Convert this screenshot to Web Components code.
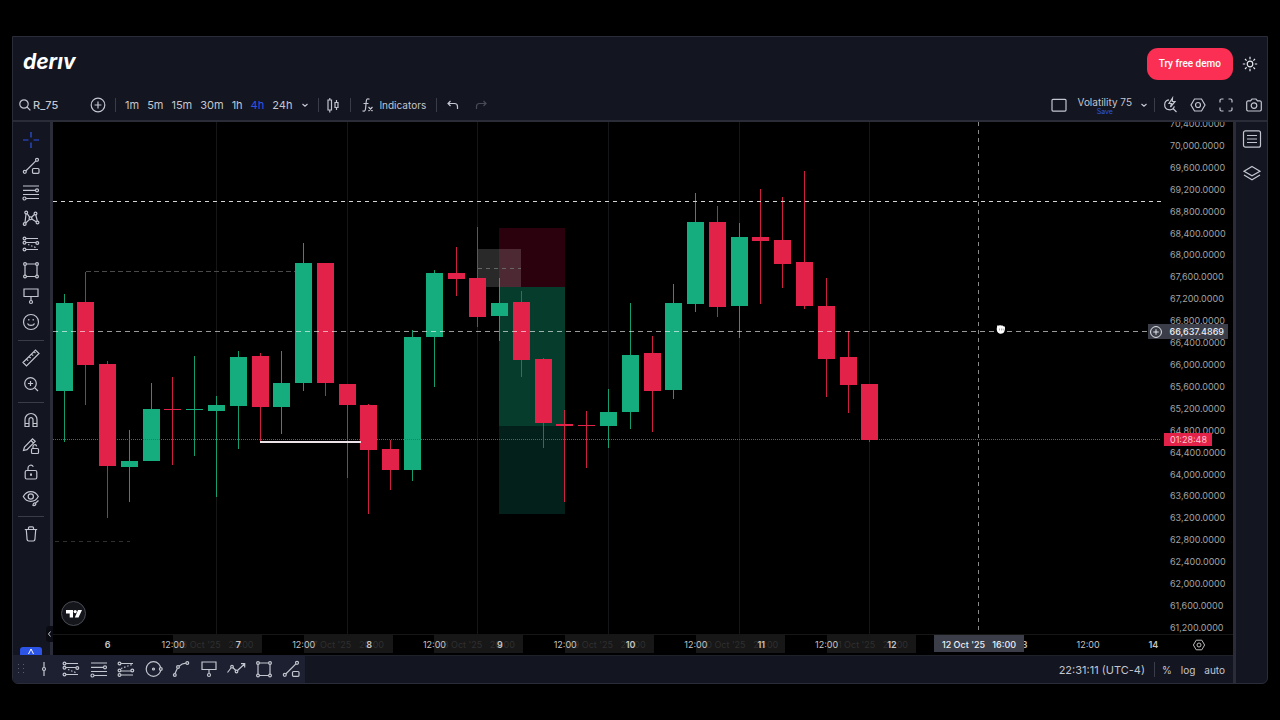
<!DOCTYPE html>
<html lang="en">
<head>
<meta charset="utf-8">
<meta name="viewport" content="width=device-width, initial-scale=1">
<title>Deriv charts</title>
<style>
  * { box-sizing: border-box; }

  body {
    --panel: #131520;
    --line: #2a2c38;
    --text: #c3c6cf;
    --blue: #2c55e8;
    --green: #15ac7e;
    --red: #e32249;
    margin: 0;
    min-height: 100vh;
    padding: 36px 12px;
    display: flex;
    background: #000;
    color: var(--text);
    font: 10px/14px Inter, "Liberation Sans", sans-serif;
  }
</style>
</head>
<body>
<chart-app>
  <app-header slot="header"></app-header>
  <chart-toolbar slot="toolbar"></chart-toolbar>
  <drawing-rail slot="left"></drawing-rail>
  <price-chart slot="chart"></price-chart>
  <favorites-bar slot="bottom"></favorites-bar>
  <chart-footer slot="bottom"></chart-footer>
  <widget-rail slot="right"></widget-rail>
</chart-app>

<script>
const BASE = `
  * { box-sizing: border-box; }
  button {
    display: flex;
    align-items: center;
    justify-content: center;
    margin: 0;
    padding: 0;
    border: 0;
    background: none;
    color: inherit;
    font: inherit;
    white-space: nowrap;
    cursor: pointer;
  }
`;

// 20x20 line icons, stroked with the current colour
const ICONS = {
  search: '<circle cx="9" cy="9" r="4.2"/><path d="M12 12l3.4 3.4"/>',
  plus: '<circle cx="10" cy="10" r="6.8"/><path d="M10 6.6v6.8M6.6 10h6.8"/>',
  chevron: '<path d="M7.5 9l2.5 2.2L12.500 9"/>',
  candles: '<path d="M5 5h3.500v10H5zM6.800 3V5M6.800 15v2.500M12 7.500h3v5h-3zM13.500 5V7.500M13.500 12.500v2.500"/>',
  fx: '<path d="M11.500 4.200c-2-1-3 0-3.200 1.800L7.500 14c-.2 2-1.500 2.700-3 1.800M5.500 8.500h5M10.500 12l4 4M14.500 12l-4 4"/>',
  undo: '<path d="M7.500 6L5 8.500 7.500 11M5 8.500h6.500a3 3 0 0 1 3 3V14"/>',
  redo: '<path d="M12.500 6L15 8.500 12.500 11M15 8.500H8.500a3 3 0 0 0-3 3V14"/>',
  square: '<rect x="3" y="4.300" width="14" height="11.800" rx="1"/>',
  quick: '<path d="M9 4.800a5 5 0 1 0 5.400 6.600M13 13.500l3.500 3.500M12.500 3L9 8.500h2.500L10.500 12l4.500-5.500h-2.700z"/>',
  hexagon: '<path d="M6.500 4h7L17 10l-3.500 6h-7L3 10z"/><circle cx="10" cy="10" r="2.500"/>',
  fullscreen: '<path d="M4 7.500V5.500A1.500 1.500 0 0 1 5.500 4h2M12.500 4h2A1.500 1.500 0 0 1 16 5.500v2M16 12.500v2a1.500 1.500 0 0 1-1.500 1.500h-2M7.500 16h-2A1.500 1.500 0 0 1 4 14.500v-2"/>',
  camera: '<path d="M4 5.800h2.500L8 4h4l1.500 1.800H16A1.500 1.500 0 0 1 17.300 7.300v7.200A1.500 1.500 0 0 1 16 16H4a1.500 1.500 0 0 1-1.300-1.500V7.300A1.500 1.500 0 0 1 4 5.800z"/><circle cx="10" cy="10.600" r="2.800"/>',
  sun: '<circle cx="10" cy="10" r="2.800"/><path d="M10 2.800v2.400M10 14.800v2.400M2.800 10h2.400M14.800 10h2.400M5 5l1.600 1.600M13.400 13.400L15 15M15 5l-1.600 1.600M6.600 13.400L5 15"/>',
  cross: '<path d="M10 2v5.500M10 12.500V18M2 10h5.500M12.500 10H18"/>',
  trend: '<circle cx="3.800" cy="15.800" r="1.500"/><circle cx="16" cy="3.800" r="1.500"/><path d="M5 14.700L14.900 4.900"/><rect x="11.500" y="12.500" width="6.500" height="4.800" rx="1"/>',
  fib: '<path d="M2 4h16M2 8.300h12.500M2 12.500h16M5 16.500h13"/><circle cx="16" cy="8.300" r="1.500"/><circle cx="3.500" cy="16.500" r="1.500"/>',
  pattern: '<circle cx="5.200" cy="4.500" r="1.400"/><circle cx="14.500" cy="5.500" r="1.400"/><circle cx="3.700" cy="16" r="1.400"/><circle cx="16.500" cy="14.500" r="1.400"/><circle cx="9.500" cy="10.300" r="1.400"/><path d="M5 6L4 14.500M14.800 7l1.500 6M6.200 5.600l2.400 3.600M13.500 6.500L10.500 9.300M4.800 15l3.700-3.700M10.700 11l4.500 2.800"/>',
  forecast: '<path d="M5 4.500h12M5 8.500h10M5 15.500h12"/><path d="M7 10.500l9 3.500" stroke-dasharray="1.500 1.800"/><circle cx="3.500" cy="4.500" r="1.400"/><circle cx="3.500" cy="8.800" r="1.400"/><circle cx="16.300" cy="9" r="1.400"/><circle cx="3.500" cy="15.500" r="1.400"/>',
  position: '<path d="M5 4.500h12M5 12h10M5 16h12"/><path d="M5 9.500l11-4" stroke-dasharray="1.500 1.800"/><circle cx="3.500" cy="4.500" r="1.400"/><circle cx="3.500" cy="11.500" r="1.400"/><circle cx="16.300" cy="11.500" r="1.400"/><circle cx="3.500" cy="16" r="1.400"/>',
  rect: '<path d="M5.200 4h9.600M5.200 16.500h9.600M4 5.300v9.900M16 5.300v9.900"/><circle cx="4" cy="4" r="1.400"/><circle cx="16" cy="4" r="1.400"/><circle cx="4" cy="16.500" r="1.400"/><circle cx="16" cy="16.500" r="1.400"/>',
  callout: '<path d="M3 3h14v7.500H3zM10 10.500v4"/><circle cx="10" cy="16" r="1.500"/>',
  smile: '<circle cx="10" cy="10" r="7.500"/><path d="M6.500 11.500c1 2.500 6 2.500 7 0M7.800 7v1.500M12.200 7v1.500"/>',
  ruler: '<path d="M2 14.500L14.500 2 18 5.500 5.500 18zM5.500 11l1.700 1.700M8 8.500l1.700 1.700M10.500 6l1.700 1.700M13 3.700l1.500 1.500"/>',
  zoom: '<circle cx="9.500" cy="9.500" r="5.800"/><path d="M13.800 13.800L17 17M9.500 6.900v5.200M6.900 9.500h5.200"/>',
  magnet: '<path d="M4 16.500V9.500a6 6 0 0 1 12 0v7h-4V9.700a2 2 0 0 0-4 0v6.800zM4 13.500h4M12 13.500h4"/>',
  pencil: '<path d="M2.500 14.500l1-3.500L11.500 2.800l2.700 2.500L6 13.600zM10 4.500l2.500 2.500"/><rect x="10.500" y="12.500" width="7" height="5" rx="1"/><path d="M12 12.500v-1.700a1.800 1.800 0 0 1 3.600-.5"/>',
  lock: '<rect x="4.200" y="8.500" width="11.600" height="8.500" rx="1.500"/><path d="M7 8.500V6a2.800 2.800 0 0 1 5.300-1.300"/><path d="M10 11.500v2.200" stroke-width="2"/>',
  eye: '<path d="M2.300 8.500c3.500-6.500 11.500-6.500 15 0c-3.500 6.500-11.500 6.500-15 0z"/><circle cx="9.800" cy="8.500" r="2.600"/><path d="M12 17.500c0-2 1-2.800 2.500-2.500 1 1.500-.5 3-2.500 2.500zM14.700 15l2.800-2.500"/>',
  trash: '<path d="M3.800 5.500h12.400M7.500 5.300V3.800a1 1 0 0 1 1-1h3a1 1 0 0 1 1 1v1.500M5.300 5.700l.8 10a1.500 1.500 0 0 0 1.500 1.300h4.800a1.500 1.500 0 0 0 1.500-1.300l.8-10"/>',
  vline: '<path d="M10 3v5.500M10 11.500V17"/><circle cx="10" cy="10" r="1.500"/>',
  circle: '<circle cx="9.500" cy="10" r="7.300"/><circle cx="9.500" cy="10" r="1"/><circle cx="16.800" cy="10" r="1.400" fill="#1c2030"/>',
  curve: '<circle cx="3.800" cy="16" r="1.400"/><circle cx="7" cy="8" r="1.400"/><circle cx="16.300" cy="4" r="1.400"/><path d="M4 14.600L6.300 9.400M8.200 7.200c2-2 4-2.800 6.700-3"/>',
  path: '<path d="M1.500 13.500L5 9M6.800 8.500l3 3M11.500 11.500L18.500 5M15 4.700h3.700v3.700"/><circle cx="6" cy="7.700" r="1.300"/><circle cx="10.500" cy="12.500" r="1.300"/>',
  list: '<rect x="1.500" y="1.800" width="17" height="16.400" rx="2"/><path d="M5 6.500h10M5 10h10M5 13.500h10"/>',
  layers: '<path d="M10 3.500l8 4.700-8 4.600-8-4.600zM2 12l8 4.700 8-4.700"/>'
};

class LineIcon extends HTMLElement {
  constructor() {
    super();
    this.attachShadow({ mode: 'open' });
  }

  connectedCallback() {
    this.shadowRoot.innerHTML = `
      <style>
        :host { display: block; width: 20px; height: 20px; flex: none; }
        svg { display: block; width: 100%; height: 100%; }
      </style>
      <svg viewBox="0 0 20 20" fill="none" stroke="currentColor" stroke-width="1.200" aria-hidden="true">
        ${ICONS[this.getAttribute('name')]}
      </svg>
    `;
  }
}

class ChartApp extends HTMLElement {
  constructor() {
    super();
    this.attachShadow({ mode: 'open' }).innerHTML = `
      <style>
        ${BASE}
        :host {
          flex: 1;
          min-width: 0;
          display: flex;
          flex-direction: column;
          background: var(--panel);
          border: 1px solid var(--line);
          border-radius: 0 0 6px 6px;
          overflow: hidden;
        }
        .body, .stage { flex: 1; display: flex; min-width: 0; }
        .main { flex: 1; min-width: 0; display: flex; flex-direction: column; }
        .bottom { display: flex; height: 28px; }
      </style>
      <slot name="header"></slot>
      <slot name="toolbar"></slot>
      <div class="body">
        <div class="main">
          <div class="stage">
            <slot name="left"></slot>
            <slot name="chart"></slot>
          </div>
          <div class="bottom"><slot name="bottom"></slot></div>
        </div>
        <slot name="right"></slot>
      </div>
    `;
  }
}

class AppHeader extends HTMLElement {
  constructor() {
    super();
    this.attachShadow({ mode: 'open' }).innerHTML = `
      <style>
        ${BASE}
        :host {
          display: flex;
          align-items: center;
          height: 53px;
          padding: 0 7px 0 10px;
        }
        .logo {
          margin-right: auto;
          padding-bottom: 4px;
          color: #fff;
          font: italic 700 21px/24px Inter, sans-serif;
          text-decoration: none;
        }
        .demo {
          height: 32px;
          padding: 0 12px;
          border-radius: 11px;
          background: #fb2f53;
          color: #fff;
          font: 500 10px/14px Roboto, sans-serif;
          margin-right: 7px;
        }
        .theme { color: #e6e8ee; }
      </style>
      <a class="logo" href="#" aria-label="deriv">derıv</a>
      <button class="demo">Try free demo</button>
      <button class="theme" aria-label="Theme"><line-icon name="sun"></line-icon></button>
    `;
  }
}

class ChartToolbar extends HTMLElement {
  constructor() {
    super();
    const frames = ['1m', '5m', '15m', '30m', '1h', '4h', '24h'];
    this.attachShadow({ mode: 'open' }).innerHTML = `
      <style>
        ${BASE}
        :host {
          display: flex;
          align-items: center;
          height: 32px;
          border-bottom: 2px solid var(--line);
        }
        .group { display: flex; align-items: center; }
        .sep { width: 1px; height: 14px; background: #3a3d49; }
        .symbol { width: 75px; justify-content: flex-start; padding-left: 2px; font-size: 11px; font-weight: 500; }
        .symbol line-icon { margin-right: -2px; }
        .frames { gap: 8px; padding-left: 9px; font-size: 11px; }
        .frames .on { color: var(--blue); }
        .frames line-icon { margin: 0 3px 0 -5px; }
        .icon { padding: 0 7px 0 4px; }
        .indicators { padding: 0 10px 0 7px; }
        .indicators line-icon { margin-right: 1px; }
        .undo { gap: 8px; padding-left: 6px; }
        .undo button:last-child { opacity: .3; }
        .right { margin-left: auto; padding-right: 3px; }
        .layout { flex-direction: column; margin: 0 2px 0 8px; line-height: 12px; }
        .layout small { font-size: 7px; line-height: 7px; color: var(--blue); }
        .tools { gap: 8px; padding-left: 5px; }
      </style>
      <div class="group">
        <button class="symbol"><line-icon name="search"></line-icon>R_75</button>
        <button aria-label="Compare symbols"><line-icon name="plus"></line-icon></button>
      </div>
      <span class="sep" style="margin-left: 7px"></span>
      <div class="group frames">
        ${frames.map(f => `<button class="${f === '4h' ? 'on' : ''}">${f}</button>`).join('')}
        <button aria-label="More intervals"><line-icon name="chevron"></line-icon></button>
      </div>
      <span class="sep"></span>
      <button class="icon" aria-label="Chart type"><line-icon name="candles"></line-icon></button>
      <span class="sep"></span>
      <button class="indicators"><line-icon name="fx"></line-icon>Indicators</button>
      <span class="sep"></span>
      <div class="group undo">
        <button aria-label="Undo"><line-icon name="undo"></line-icon></button>
        <button aria-label="Redo" disabled><line-icon name="redo"></line-icon></button>
      </div>
      <div class="group right">
        <button aria-label="Layout"><line-icon name="square"></line-icon></button>
        <button class="layout"><span>Volatility 75</span><small>Save</small></button>
        <button aria-label="Manage layouts"><line-icon name="chevron"></line-icon></button>
        <span class="sep"></span>
        <div class="group tools">
          <button aria-label="Quick search"><line-icon name="quick"></line-icon></button>
          <button aria-label="Settings"><line-icon name="hexagon"></line-icon></button>
          <button aria-label="Fullscreen"><line-icon name="fullscreen"></line-icon></button>
          <button aria-label="Snapshot"><line-icon name="camera"></line-icon></button>
        </div>
      </div>
    `;
  }
}

class DrawingRail extends HTMLElement {
  constructor() {
    super();
    const groups = [
      ['cross', 'trend', 'fib', 'pattern', 'forecast', 'rect', 'callout', 'smile'],
      ['ruler', 'zoom'],
      ['magnet', 'pencil', 'lock', 'eye'],
      ['trash']
    ];
    this.attachShadow({ mode: 'open' }).innerHTML = `
      <style>
        ${BASE}
        :host {
          position: relative;
          flex: none;
          display: flex;
          flex-direction: column;
          align-items: center;
          width: 40px;
          padding: 5px 2px 0 0;
          border-right: 3px solid var(--line);
        }
        button { width: 35px; height: 26px; }
        hr { width: 26px; height: 1px; margin: 5px 0 4px; border: 0; background: #3a3d49; }
        .cross { color: var(--blue); }
        .more {
          width: 22px;
          height: 8px;
          margin-top: auto;
          border-radius: 3px 3px 0 0;
          background: var(--blue);
          color: #fff;
        }
        .fold {
          position: absolute;
          right: -3px;
          bottom: 13px;
          width: 7px;
          height: 16px;
          border-radius: 3px 0 0 3px;
          background: #0b0c13;
        }
      </style>
      ${groups.map(g => g.map(n => `
        <button class="${n}" aria-label="${n}"><line-icon name="${n}"></line-icon></button>`).join('')).join('<hr>')}
      <button class="more" aria-label="More tools">
        <svg width="8" height="6" viewBox="0 0 8 6" fill="none" stroke="currentColor"><path d="M1.500 6L4 1l2.500 5"/></svg>
      </button>
      <button class="fold" aria-label="Hide toolbar">
        <svg width="5" height="8" viewBox="0 0 5 8" fill="none" stroke="currentColor"><path d="M3.500 1.500L1.500 4l2 2.500"/></svg>
      </button>
    `;
  }
}

// [up, high, top of body, bottom of body, low], one candle per bar slot
const CANDLES = [
  [1, 172, 181, 269, 320], [0, 150, 180, 243, 283], [0, 239, 242, 344, 396],
  [1, 308, 339, 345, 380], [1, 261, 287, 339, 339], [0, 255, 287, 288, 343],
  [1, 234, 287, 288, 334], [1, 274, 283, 289, 375], [1, 229, 235, 284, 327],
  [0, 231, 234, 285, 319], [1, 229, 261, 285, 312], [1, 121, 141, 261, 269],
  [0, 141, 141, 261, 274], [0, 262, 262, 283, 356], [0, 282, 283, 328, 392],
  [0, 318, 327, 348, 368], [1, 208, 215, 348, 359], [1, 148, 151, 215, 265],
  [0, 125, 151, 157, 174], [0, 105, 156, 195, 205], [1, 156, 181, 194, 219],
  [0, 169, 180, 238, 255], [0, 236, 237, 301, 326], [0, 288, 302, 304, 380],
  [0, 289, 303, 304, 346], [1, 267, 290, 304, 326], [1, 181, 233, 290, 307],
  [0, 214, 231, 269, 310], [1, 162, 181, 268, 277], [1, 71, 100, 182, 190],
  [0, 84, 100, 185, 195], [1, 101, 115, 184, 216], [0, 67, 115, 119, 182],
  [0, 75, 118, 142, 166], [0, 49, 140, 184, 187], [0, 156, 184, 237, 275],
  [0, 209, 235, 263, 291], [0, 262, 262, 318, 320]
];
const FIRST_BAR = 10.5;
const BAR_STEP = 21.78;

class PriceChart extends HTMLElement {
  constructor() {
    super();
    this.attachShadow({ mode: 'open' });
  }

  connectedCallback() {
    const candles = CANDLES.map(([up, high, top, bottom, low], i) => {
      const x = Math.round(FIRST_BAR + i * BAR_STEP);
      const color = up ? 'var(--green)' : 'var(--red)';
      return `<path d="M${x + .5} ${high}V${low}" stroke="${color}" stroke-opacity=".9"/>
        <rect x="${x - 8}" y="${top}" width="17" height="${bottom - top}" fill="${color}"/>`;
    }).join('');

    const days = [7, 13, 19, 25, 31, 37].map(i => {
      const x = Math.round(FIRST_BAR + i * BAR_STEP) + .5;
      return `<line x1="${x}" x2="${x}" y1="0" y2="100%" stroke="#141618"/>`;
    }).join('');

    let prices = '';
    for (let p = 70400; p >= 61200; p -= 400) {
      prices += `<li>${p.toLocaleString('en-US')}.0000</li>`;
    }

    let times = '';
    for (let day = 6; day <= 14; day++) {
      times += `<li><b>${day}</b></li>`;
      if (day === 14) break;
      const ghost = day < 12 ? `<span class="ghost">${day} Oct '25 &nbsp; 20:00</span>` : '';
      // the crosshair label covers the tick of its own slot
      times += `<li>${day === 12 ? '' : '12:00'}${ghost}</li>`;
    }

    this.shadowRoot.innerHTML = `
      <style>
        ${BASE}
        :host {
          position: relative;
          flex: 1;
          min-width: 0;
          display: flex;
          flex-direction: column;
          overflow: hidden;
          background: #000;
          font-size: 9px;
        }
        ol { margin: 0; padding: 0; list-style: none; }
        .pane { flex: 1; display: flex; min-height: 512px; }
        .plot { flex: 1; min-width: 0; height: 512px; overflow: hidden; }
        .prices {
          flex: none;
          width: 72px;
          height: 517px;
          margin-top: -5px;
          padding-left: 9px;
          display: flex;
          flex-direction: column;
          justify-content: space-between;
          color: #a3a3a3;
          line-height: 13px;
        }
        .axis {
          position: relative;
          display: flex;
          align-items: center;
          height: 21px;
          border-top: 1px solid #161616;
          background: #000;
          color: #c4c4c4;
        }
        .times { flex: 1; display: flex; padding-left: 22px; isolation: isolate; }
        .times li { position: relative; flex: 1; text-align: center; }
        .times b { font-weight: 600; }
        .ghost {
          position: absolute;
          z-index: -1;
          left: 50%;
          top: -3px;
          width: 89px;
          height: 18px;
          background: #171717;
          color: #2f2f2f;
          line-height: 20px;
        }
        .gear { width: 47px; padding-right: 22px; }
        .gear line-icon { width: 16px; height: 16px; }
        .tag { position: absolute; background: #3b3e49; color: #eceef2; font-weight: 500; white-space: nowrap; }
        .cross {
          right: 5px;
          top: 202px;
          display: flex;
          align-items: center;
          height: 15px;
          padding-right: 4px;
        }
        .cross line-icon { width: 16px; height: 16px; margin-right: 5px; }
        .when { left: 881px; top: 0; width: 90px; height: 17px; line-height: 19px; text-align: center; }
        .left { right: 21px; top: 311px; width: 48px; height: 13px; padding-left: 6px; background: var(--red); color: #ffc9d3; line-height: 13px; font-weight: 400; }
        .tv { position: absolute; left: 8px; bottom: 29px; }
      </style>
      <div class="pane">
        <svg class="plot" role="img" aria-label="Price chart">
          ${days}
          <rect x="446" y="106" width="66" height="59" fill="#2b010d"/>
          <rect x="446" y="165" width="66" height="139" fill="#053c2c"/>
          <rect x="446" y="304" width="66" height="88" fill="#03201a"/>
          <rect x="425" y="127" width="43" height="38" fill="#fff" fill-opacity=".16"/>
          <path d="M425 146.500h43" stroke="#666" stroke-dasharray="4 4"/>
          <path d="M33 149.500h209" stroke="#4a4a4a" stroke-dasharray="5 3"/>
          <path d="M2 419.500h75" stroke="#303030" stroke-dasharray="4 4"/>
          ${candles}
          <path d="M207 320h101" stroke="#ece4e8" stroke-width="2"/>
          <line x2="100%" y1="317.500" y2="317.500" stroke="var(--red)" stroke-dasharray="1 1"/>
          <line x2="100%" y1="79.500" y2="79.500" stroke="#d4d4d4" stroke-dasharray="4 4"/>
          <line x2="100%" y1="209.500" y2="209.500" stroke="#fff" stroke-opacity=".6" stroke-dasharray="5 4"/>
          <line x1="925.500" x2="925.500" y2="100%" stroke="#8a8a8a" stroke-dasharray="4 4"/>
          <path d="M944 205c0-2 1.500-2 2-1 .5-1.300 1.700-1.200 2 0 .6-1 1.600-.8 2 .3 1.200-.5 2 .2 2 1.500 0 3-1 6-4 6-3 0-5-2.500-4-6.800z" fill="#fff"/>
          <path d="M946.500 206.500v2M948.500 206.500v2M950.200 206.500v2" stroke="#777" stroke-width=".6"/>
        </svg>
        <ol class="prices">${prices}</ol>
      </div>
      <div class="axis">
        <ol class="times">${times}</ol>
        <button class="gear" aria-label="Axis settings"><line-icon name="hexagon"></line-icon></button>
        <span class="tag when">12 Oct '25 &nbsp; 16:00</span>
      </div>
      <span class="tag left">01:28:48</span>
      <span class="tag cross"><line-icon name="plus"></line-icon>66,637.4869</span>
      <svg class="tv" width="25" height="25" viewBox="0 0 25 25" role="img" aria-label="TradingView">
        <circle cx="12.500" cy="12.500" r="12" fill="#15161c" stroke="#4a4c55"/>
        <path d="M5 9h7v7.500H8.700v-4H5zM17 9h4l-3.500 7.500h-3.700z" fill="#fff"/>
        <circle cx="14.200" cy="10.600" r="1.600" fill="#fff"/>
      </svg>
    `;
  }
}

class FavoritesBar extends HTMLElement {
  constructor() {
    super();
    const tools = ['vline', 'forecast', 'fib', 'position', 'circle', 'curve', 'callout', 'path', 'rect', 'trend'];
    this.attachShadow({ mode: 'open' }).innerHTML = `
      <style>
        ${BASE}
        :host {
          flex: none;
          display: flex;
          align-items: center;
          width: 292px;
          height: 28px;
          background: #1c2030;
        }
        .grip { width: 17px; padding-left: 5px; color: #5b5e6a; }
        .grip svg { display: block; }
        button { flex: 1; min-width: 0; }
      </style>
      <span class="grip">
        <svg width="7" height="10" fill="currentColor"><path d="M0 0h1v1H0zM5 0h1v1H5zM0 4h1v1H0zM5 4h1v1H5zM0 8h1v1H0zM5 8h1v1H5z"/></svg>
      </span>
      ${tools.map(t => `<button aria-label="${t}"><line-icon name="${t}"></line-icon></button>`).join('')}
    `;
  }
}

class ChartFooter extends HTMLElement {
  constructor() {
    super();
    this.attachShadow({ mode: 'open' }).innerHTML = `
      <style>
        ${BASE}
        :host {
          flex: 1;
          display: flex;
          align-items: center;
          justify-content: flex-end;
          gap: 9px;
          padding-right: 8px;
          border-top: 1px solid #1e202a;
        }
        .clock { font-size: 11px; }
        .sep { width: 1px; height: 15px; margin-right: -2px; background: #3a3d49; }
      </style>
      <button class="clock">22:31:11 (UTC-4)</button>
      <span class="sep"></span>
      <button>%</button>
      <button>log</button>
      <button>auto</button>
    `;
  }
}

class WidgetRail extends HTMLElement {
  constructor() {
    super();
    this.attachShadow({ mode: 'open' }).innerHTML = `
      <style>
        ${BASE}
        :host {
          flex: none;
          display: flex;
          flex-direction: column;
          align-items: center;
          gap: 14px;
          width: 34px;
          padding-top: 7px;
          border-left: 3px solid var(--line);
        }
      </style>
      <button aria-label="Data window"><line-icon name="list"></line-icon></button>
      <button aria-label="Object tree"><line-icon name="layers"></line-icon></button>
    `;
  }
}

customElements.define('line-icon', LineIcon);
customElements.define('chart-app', ChartApp);
customElements.define('app-header', AppHeader);
customElements.define('chart-toolbar', ChartToolbar);
customElements.define('drawing-rail', DrawingRail);
customElements.define('price-chart', PriceChart);
customElements.define('favorites-bar', FavoritesBar);
customElements.define('chart-footer', ChartFooter);
customElements.define('widget-rail', WidgetRail);
</script>
</body>
</html>
